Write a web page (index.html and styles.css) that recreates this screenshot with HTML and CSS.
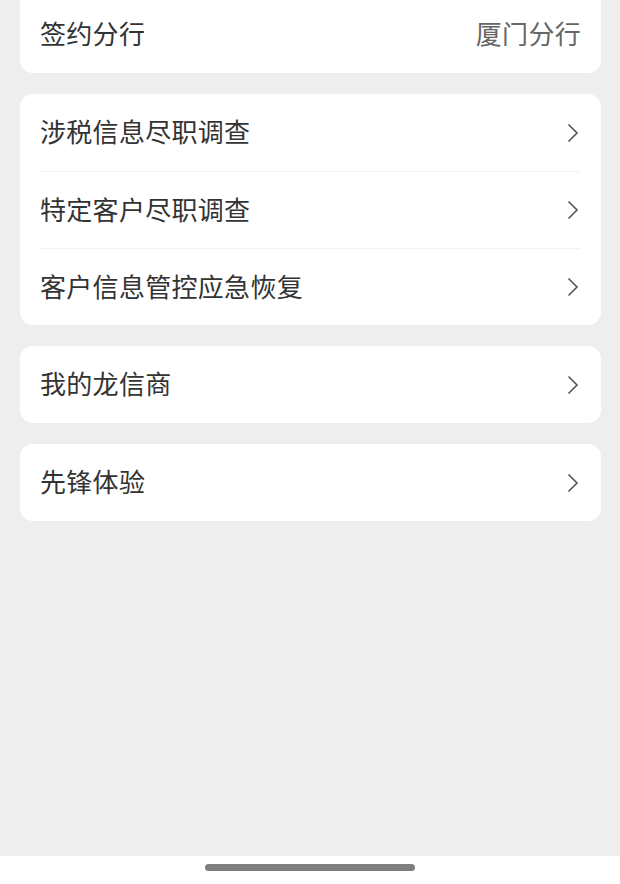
FILE: index.html
```html
<!DOCTYPE html>
<html lang="zh-CN">
<head>
    <meta charset="UTF-8">
    <meta name="viewport" content="width=device-width, initial-scale=1.0">
    <title>设置</title>
    <link rel="stylesheet" href="styles.css">
</head>
<body>
    <div class="page">
        <div class="card card-top">
            <div class="row row-first">
                <span class="label">签约分行</span>
                <span class="value">厦门分行</span>
            </div>
        </div>

        <div class="card">
            <div class="row">
                <span class="label">涉税信息尽职调查</span>
                <svg class="arrow" viewBox="0 0 12 20"><path d="M1.5 1.5 L10 10 L1.5 18.5"/></svg>
            </div>
            <div class="row">
                <span class="label">特定客户尽职调查</span>
                <svg class="arrow" viewBox="0 0 12 20"><path d="M1.5 1.5 L10 10 L1.5 18.5"/></svg>
            </div>
            <div class="row">
                <span class="label">客户信息管控应急恢复</span>
                <svg class="arrow" viewBox="0 0 12 20"><path d="M1.5 1.5 L10 10 L1.5 18.5"/></svg>
            </div>
        </div>

        <div class="card">
            <div class="row">
                <span class="label">我的龙信商</span>
                <svg class="arrow" viewBox="0 0 12 20"><path d="M1.5 1.5 L10 10 L1.5 18.5"/></svg>
            </div>
        </div>

        <div class="card">
            <div class="row">
                <span class="label">先锋体验</span>
                <svg class="arrow" viewBox="0 0 12 20"><path d="M1.5 1.5 L10 10 L1.5 18.5"/></svg>
            </div>
        </div>
    </div>

    <div class="home-bar">
        <div class="home-indicator"></div>
    </div>
</body>
</html>
```

FILE: styles.css
```css
html, body {
    margin: 0;
    padding: 0;
    height: 100%;
}
body {
    font-family: "Noto Sans CJK SC", "Noto Sans", sans-serif;
    background-color: #eeeeee;
    display: flex;
    flex-direction: column;
}
.page {
    flex: 1;
    padding: 0 19px 0 20px;
    display: flex;
    flex-direction: column;
    gap: 21px;
}
.card {
    background-color: #fff;
    border-radius: 13px;
    padding: 0 20px;
}
.card-top {
    border-radius: 0 0 13px 13px;
}
.row {
    height: 77px;
    box-sizing: border-box;
    display: flex;
    align-items: center;
    justify-content: space-between;
}
.row + .row {
    border-top: 1px solid #f3f3f3;
}
.row-first {
    height: 73px;
    padding-bottom: 5px;
}
.label,
.value {
    font-size: 26px;
    letter-spacing: 0.3px;
    margin-bottom: 4px;
}
.label {
    color: #333;
}
.value {
    color: #666;
}
.arrow {
    width: 12px;
    height: 20px;
    margin-right: 2px;
    fill: none;
    stroke: #555;
    stroke-width: 1.6;
}
.home-bar {
    height: 28px;
    background-color: #fff;
    display: flex;
    justify-content: center;
    padding-top: 8px;
    box-sizing: border-box;
}
.home-indicator {
    width: 210px;
    height: 7px;
    border-radius: 4px;
    background-color: #7f7f7f;
}
```
